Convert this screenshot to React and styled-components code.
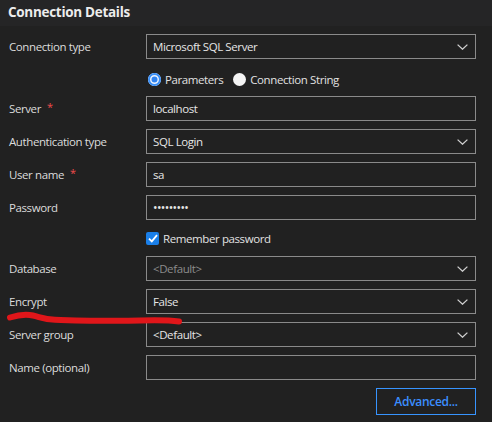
import React from 'react';
import styled, { createGlobalStyle } from 'styled-components';

const GlobalStyle = createGlobalStyle`
  html, body {
    margin: 0;
    padding: 0;
    background: #212121;
  }
  body {
    font-family: 'Open Sans', 'Noto Sans', sans-serif;
    color: #d8d8d8;
    -webkit-font-smoothing: antialiased;
  }
`;

const Panel = styled.div`
  position: relative;
  width: 492px;
  height: 422px;
  background: #212121;
  overflow: hidden;
`;

const Header = styled.div`
  height: 26px;
  padding-left: 8px;
  background: #252526;
  font-size: 13.5px;
  font-weight: 700;
  letter-spacing: -0.3px;
  line-height: 25px;
  color: #ececec;
`;

const Body = styled.div`
  padding: 8px 16px 0 9px;
  display: flex;
  flex-direction: column;
`;

const Row = styled.div`
  display: grid;
  grid-template-columns: 137px 1fr;
  align-items: center;
  height: ${({ $height }) => $height || 25}px;
  margin-bottom: ${({ $gap }) => ($gap === undefined ? 8 : $gap)}px;
  font-size: 11.5px;
  letter-spacing: -0.4px;
`;

const Label = styled.div`
  display: flex;
  align-items: flex-start;
  color: #dcdcdc;
`;

const Required = styled.span`
  margin-left: 6px;
  color: #f14c4c;
  font-size: 11px;
  line-height: 11px;
`;

const Box = styled.div`
  box-sizing: border-box;
  height: 25px;
  display: flex;
  align-items: center;
  justify-content: space-between;
  padding: 0 7px 0 6px;
  border: 1px solid #8a8a8a;
  background: #212121;
  color: ${({ $muted }) => ($muted ? '#8c8c8c' : '#e6e6e6')};
`;

const Dots = styled.span`
  font-size: 12px;
  letter-spacing: -0.6px;
  color: #e6e6e6;
`;

const Options = styled.div`
  display: flex;
  align-items: center;
  gap: 8px;
`;

const Choice = styled.label`
  display: flex;
  align-items: center;
  gap: 4px;
  color: #e2e2e2;
`;

const Radio = styled.span`
  box-sizing: border-box;
  width: 13px;
  height: 13px;
  border-radius: 50%;
  margin-left: 2px;
  background: ${({ $checked }) => ($checked ? '#2f83f0' : '#f4f4f4')};
  box-shadow: ${({ $checked }) =>
    $checked ? 'inset 0 0 0 2px #3b8ff5, inset 0 0 0 3.5px #e9f1fd' : 'none'};
`;

const Check = styled.span`
  width: 13px;
  height: 13px;
  border-radius: 2px;
  background: #1a7fe8;
  display: flex;
  align-items: center;
  justify-content: center;
`;

const Footer = styled.div`
  display: flex;
  justify-content: flex-end;
`;

const Button = styled.button`
  box-sizing: border-box;
  width: 100px;
  height: 27px;
  border: 1px solid #3794ff;
  background: transparent;
  color: #3b8eff;
  font-family: inherit;
  font-size: 12px;
  font-weight: 600;
  letter-spacing: -0.3px;
  cursor: pointer;
`;

const Scribble = styled.svg`
  position: absolute;
  left: 0;
  top: 0;
  pointer-events: none;
`;

const Chevron = () => (
  <svg width="11" height="6" viewBox="0 0 11 6">
    <polyline points="0.6,0.6 5.5,5.2 10.4,0.6" fill="none" stroke="#d0d0d0" strokeWidth="1.3" />
  </svg>
);

const Field = ({ label, required, value, select, muted, children }) => (
  <Row>
    <Label>
      {label}
      {required && <Required>*</Required>}
    </Label>
    <Box $muted={muted}>
      {children || <span>{value}</span>}
      {select && <Chevron />}
    </Box>
  </Row>
);

const App = () => (
  <Panel>
    <GlobalStyle />
    <Header>Connection Details</Header>
    <Body>
      <Field label="Connection type" value="Microsoft SQL Server" select />
      <Row $height={24} $gap={5}>
        <span />
        <Options>
          <Choice>
            <Radio $checked />
            Parameters
          </Choice>
          <Choice>
            <Radio />
            Connection String
          </Choice>
        </Options>
      </Row>
      <Field label="Server" required value="localhost" />
      <Field label="Authentication type" value="SQL Login" select />
      <Field label="User name" required value="sa" />
      <Field label="Password">
        <Dots>•••••••••</Dots>
      </Field>
      <Row $height={20}>
        <span />
        <Choice>
          <Check>
            <svg width="10" height="9" viewBox="0 0 10 9">
              <polyline points="1,4.6 3.8,7.4 9,1.2" fill="none" stroke="#fff" strokeWidth="1.8" />
            </svg>
          </Check>
          Remember password
        </Choice>
      </Row>
      <Field label="Database" value="<Default>" select muted />
      <Field label="Encrypt" value="False" select />
      <Field label="Server group" value="<Default>" select />
      <Field label="Name (optional)" value="" />
      <Footer>
        <Button>Advanced...</Button>
      </Footer>
    </Body>
    <Scribble width="492" height="422">
      <path
        d="M10 317.5 C 18 315, 26 314, 33 315.5 C 40 317, 44 319.5, 55 319.8 C 80 320.5, 110 321.5, 140 320.5 C 160 320, 172 320.5, 179 321.5"
        fill="none"
        stroke="#e0161a"
        strokeWidth="6"
        strokeLinecap="round"
      />
    </Scribble>
  </Panel>
);

export default App;
